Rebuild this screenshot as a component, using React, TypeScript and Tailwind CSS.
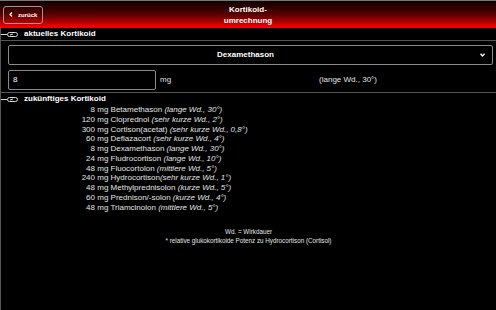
import React from "react";

const rows: { n: string; name: string; note: string; gap?: boolean }[] = [
  { n: "8", name: "Betamethason", note: "(lange Wd., 30°)", gap: true },
  { n: "120", name: "Cloprednol", note: "(sehr kurze Wd., 2°)", gap: true },
  { n: "300", name: "Cortison(acetat)", note: "(sehr kurze Wd., 0,8°)", gap: true },
  { n: "60", name: "Deflazacort", note: "(sehr kurze Wd., 4°)", gap: true },
  { n: "8", name: "Dexamethason", note: "(lange Wd., 30°)", gap: true },
  { n: "24", name: "Fludrocortison", note: "(lange Wd., 10°)", gap: true },
  { n: "48", name: "Fluocortolon", note: "(mittlere Wd., 5°)", gap: true },
  { n: "240", name: "Hydrocortison", note: "(sehr kurze Wd., 1°)", gap: false },
  { n: "48", name: "Methylprednisolon", note: "(kurze Wd., 5°)", gap: true },
  { n: "60", name: "Prednison/-solon", note: "(kurze Wd., 4°)", gap: true },
  { n: "48", name: "Triamcinolon", note: "(mittlere Wd., 5°)", gap: true },
];

function Ampoule() {
  return (
    <svg width="20" height="8" viewBox="0 0 20 8" fill="none" stroke="#d8d8d8" strokeWidth="1">
      <line x1="0" y1="4.5" x2="6" y2="4.5" />
      <rect x="6.5" y="2.5" width="10" height="4" rx="2" />
      <line x1="9" y1="5" x2="12" y2="4" />
    </svg>
  );
}

function SectionHeader({ title }: { title: string }) {
  return (
    <div className="flex items-center h-[12px]">
      <Ampoule />
      <span className="ml-[3px] text-[8px] font-bold text-white leading-none">{title}</span>
    </div>
  );
}

export default function App() {
  return (
    <div className="w-[496px] h-[310px] bg-black overflow-hidden font-['Liberation_Sans',Arial,sans-serif] text-[#e4e4e4]">
      <div className="grid grid-cols-[1fr_auto_1fr] items-center h-[28px] border-t border-[#777] bg-linear-to-b from-[#0d0000] via-[#5a0000] to-[#ff0000]">
        <div className="pl-[3px]">
          <div className="flex items-center w-[40px] h-[18px] border border-[#9a9a9a] rounded-[3px] pl-[5px] gap-[5px]">
            <svg width="4" height="5" viewBox="0 0 4 5" fill="none" stroke="#fff" strokeWidth="1.2">
              <path d="M3 0.5 L1 2.5 L3 4.5" />
            </svg>
            <span className="text-[6px] font-bold text-white leading-none">zurück</span>
          </div>
        </div>
        <div className="text-center text-[8px] font-bold text-white leading-[11px]">
          Kortikoid-
          <br />
          umrechnung
        </div>
        <div />
      </div>

      <div className="border-l border-[#555] h-full">
        <SectionHeader title="aktuelles Kortikoid" />
        <div className="border-b border-[#555]" />

        <div className="pl-[7px] pr-[3px] mt-[4px]">
          <div className="relative flex items-center justify-center h-[20px] border border-[#8a8a8a] rounded-[2px]">
            <span className="text-[8px] font-bold text-white leading-none pr-[10px]">Dexamethason</span>
            <svg className="absolute right-[7px] top-[7px]" width="5" height="4" viewBox="0 0 5 4" fill="none" stroke="#fff" strokeWidth="1.3">
              <path d="M0.5 0.8 L2.5 3 L4.5 0.8" />
            </svg>
          </div>

          <div className="flex items-center mt-[5px] h-[20px]">
            <div className="flex items-center w-[148px] h-[20px] border border-[#8a8a8a] rounded-[2px] pl-[4px]">
              <span className="text-[8px] text-white leading-none">8</span>
            </div>
            <span className="w-[47px] pl-[4px] text-[8px] leading-none">mg</span>
            <span className="flex-1 text-center text-[8px] leading-none">(lange Wd., 30°)</span>
          </div>
        </div>

        <div className="border-b border-[#555] mt-[2px]" />
        <SectionHeader title="zukünftiges Kortikoid" />

        <div className="text-[8px] leading-[9.75px]">
          {rows.map((r, i) => (
            <div key={i} className="flex whitespace-pre">
              <span className="w-[94px] text-right">{r.n}</span>
              <span>
                {" mg " + r.name + (r.gap ? " " : "")}
                <i>{r.note}</i>
              </span>
            </div>
          ))}
        </div>

        <div className="mt-[15px] text-center text-[6.3px] leading-[9px]">
          <div>Wd. = Wirkdauer</div>
          <div>* relative glukokortikoide Potenz zu Hydrocortison (Cortisol)</div>
        </div>
      </div>
    </div>
  );
}
